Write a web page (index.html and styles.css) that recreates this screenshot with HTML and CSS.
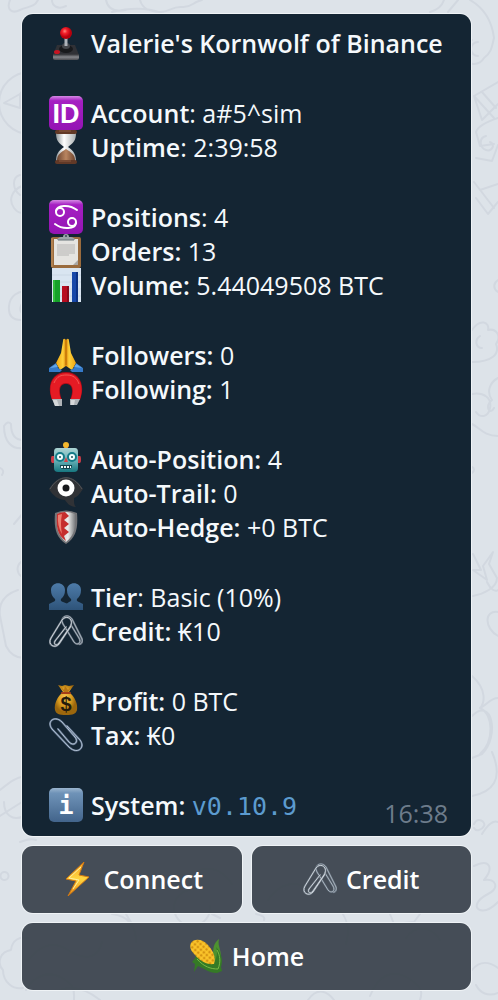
FILE: index.html
```html
<!DOCTYPE html>
<html lang="en">
<head>
  <meta charset="UTF-8" />
  <meta name="viewport" content="width=device-width, initial-scale=1" />
  <title>Valerie's Kornwolf of Binance</title>
  <link rel="stylesheet" href="styles.css">
</head>
<body>
  <!-- Chat wallpaper -->
  <svg class="wallpaper" viewBox="0 0 498 1000" preserveAspectRatio="xMidYMid slice" aria-hidden="true">
    <path d="M10 0c-4 10 2 14 10 10s14-2 18-10M52 0c0 6 6 10 14 6M106 0c2 10 10 12 20 10M140 0c2 8 10 12 20 12s12-6 22-5 10-5 20-7M112 12c16-4 34-6 52 2"/>
    <path d="M30 72a31 31 0 1 0 0 62M4 103l16-9v14zM20 94c4-4 4-8 8-10M20 175c-8 2-8 14 0 20M22 186c-10 4-14 14-8 22s10 4 14 2"/>
    <path d="M28 292c-10-2-18 4-19 14s4 14 12 14M26 302c-6 0-8 10-2 12M4 426c0 16 8 24 20 22M11 424c0 10 4 16 12 16M4 426q4-6 7-2M0 468q5 2 2 7M14 524l10-12M24 560c-8 4-8 12-3 16"/>
    <path d="M18 590c-12 4-20 12-18 26l6 30c4 8 10 12 18 12M0 790c10-8 18-14 24-13M4 802c0 12 8 20 20 14M0 816l22-14M4 872a4 4 0 1 0 1 8 4 4 0 0 0-1-8M28 938c-8-2-16 2-17 12-12 2-14 14-8 20 0 12 10 20 20 18M60 990c16-6 30 2 40 10"/>
    <path d="M430 12c8-2 12-6 14-12M470 0c14 8 22 22 24 38M494 38c-2 8-2 14-10 20a12 12 0 1 1-12-18M478 42a7 7 0 1 0 0 14M448 12l10-12M498 82l-24 14 8 24 16-16M474 96l20 22M482 92l14 16"/>
    <path d="M498 118c-12 4-20 8-22 14l4 14 14-2M486 136c-8 2-6 12 0 14s10-6 4-8M476 158l16 3 6-16M474 182l20 26M480 190l18-6M476 198l12 16 10-12M498 280c-5 3-5 9 0 12"/>
    <path d="M472 330c8-12 18-8 16 0 8-2 14 6 8 14 4 10-4 18-24 18M480 336c-6 4-4 12 2 12M498 378c-8 4-12 14-6 22-8 6-2 16 2 8M472 394c12-2 20 4 18 14s-10 10-14 4M472 424c8 4 12 12 26 12M472 467q4 2 0 6"/>
    <path d="M473 554l8 16h-8l14 10-4-14 10-14-4 12 8 14c0 10-14 16-24 18M487 582c4 8 8 10 11 8M498 612c-14-2-14 16 0 24M472 676c16 14 12 28 8 32M498 698c-8 0-12 8-18 10M472 716c20-20 28 20 10 38l-10 4M480 708c14 6 14 34 0 46M492 752c12 28 0 40-20 44M474 824c4-8 12-2 10 2s-8 6-10 2M482 834c6-10 12-14 16-12"/>
    <path d="M474 866c16-8 20 2 10 14 12-2 16 8 4 14s-14 14-8 16 12-2 18-8M472 970c8-10 18-8 26-2M476 985c4 8 12 12 22 8M20 842c6-2 10-4 16-2M200 870c14-4 24 2 32 14M112 914c16 2 24 12 24 28M126 914l6 10M212 914l8 4M256 914q10 2 8 6M390 914l4 10 20-2 6-8M340 910c8 10 10 20 6 34M308 1000c10-14 20-8 26 0M370 996c8-20 22-28 38-18s14 16 12 22"/>
    <path d="M26 990c8-14 22-20 36-12s12 14 12 22M28 960c12-14 24-20 40-10s30 10 34-8M190 890a18 18 0 1 0 20 16M268 900c12-18 28-20 44-10M440 940c-10-16-26-14-34-2"/>
  </svg>

  <!-- Shared icon -->
  <svg class="symbols" aria-hidden="true">
    <symbol id="clips" viewBox="0 0 34 34">
      <g fill="none" stroke-linecap="round">
        <path d="M22 11l8 13c3 5-2 8-5 4L14 10c-4-7 5-11 9-5l10 20c1 3-1 6-3 5" stroke="#5f6b78" stroke-width="2"/>
        <path d="M22 11l8 13c3 5-2 8-5 4L14 10c-4-7 5-11 9-5l10 20c1 3-1 6-3 5" stroke="#a9b3bd" stroke-width="1"/>
        <path d="M17 13L6 27c-2 4 2 5 4 2l11-16c5-8-4-13-8-7L2 24c-4 7 4 11 8 6L22 12" stroke="#66717c" stroke-width="2"/>
        <path d="M17 13L6 27c-2 4 2 5 4 2l11-16c5-8-4-13-8-7L2 24c-4 7 4 11 8 6L22 12" stroke="#ccd3da" stroke-width="1"/>
      </g>
    </symbol>
  </svg>

  <main class="chat">
    <article class="message">
      <section class="group">
        <h1 class="row">
          <svg class="icon" viewBox="0 0 34 34" aria-hidden="true">
            <defs>
              <radialGradient id="ball" cx=".4" cy=".35"><stop offset="0" stop-color="#ff8a7c"/><stop offset=".4" stop-color="#f5202c"/><stop offset="1" stop-color="#b8000c"/></radialGradient>
              <linearGradient id="base" x2="0" y2="1"><stop offset="0" stop-color="#2c2d31"/><stop offset=".5" stop-color="#85868b"/><stop offset="1" stop-color="#4c4d52"/></linearGradient>
            </defs>
            <path d="M8 19h18l4 10H4z" fill="#303136"/>
            <path d="M4 28h26v4q0 2-2 2H6q-2 0-2-2z" fill="url(#base)"/>
            <ellipse cx="17" cy="23" rx="7" ry="4" fill="#191a1d"/>
            <ellipse cx="17" cy="20" rx="4" ry="3" fill="#45474c"/>
            <path d="M17 11v9" stroke="#aeb3ba" stroke-width="3"/>
            <ellipse cx="8" cy="26" rx="3" ry="2" fill="#c51422"/>
            <circle cx="17" cy="7" r="6" fill="url(#ball)"/>
          </svg>
          <b>Valerie's Kornwolf of Binance</b>
        </h1>
      </section>

      <section class="group">
        <p class="row">
          <svg class="icon" viewBox="0 0 34 34" aria-hidden="true">
            <defs><linearGradient id="purple" x2="0" y2="1"><stop offset="0" stop-color="#d58ae4"/><stop offset=".14" stop-color="#a51fc2"/><stop offset="1" stop-color="#9414b4"/></linearGradient></defs>
            <rect width="34" height="34" rx="5" fill="url(#purple)"/>
            <text x="17" y="27" text-anchor="middle" class="glyph-id">ID</text>
          </svg>
          <span><b>Account</b>: a#5^sim</span>
        </p>
        <p class="row">
          <svg class="icon" viewBox="0 0 34 34" aria-hidden="true">
            <defs>
              <linearGradient id="glass"><stop offset="0" stop-color="#8f9699"/><stop offset=".4" stop-color="#fff"/><stop offset="1" stop-color="#a9aeb0"/></linearGradient>
              <linearGradient id="sand"><stop offset="0" stop-color="#6e4631"/><stop offset=".5" stop-color="#b98560"/><stop offset="1" stop-color="#704630"/></linearGradient>
            </defs>
            <path d="M7 3h20c0 8-3 10-8 14 6 4 8 8 8 14H7c0-6 2-10 8-14C10 13 7 11 7 3z" fill="url(#glass)"/>
            <path d="M8 30c0-5 4-8 9-11 5 3 9 6 9 11z" fill="url(#sand)"/>
            <rect x="6" width="22" height="4" rx="2" fill="#623927"/>
            <rect x="6" y="30" width="22" height="4" rx="2" fill="#623927"/>
            <path d="M10 1h12M10 31h12" stroke="#8a5a40" stroke-width="1"/>
          </svg>
          <span><b>Uptime</b>: 2:39:58</span>
        </p>
      </section>

      <section class="group">
        <p class="row">
          <svg class="icon" viewBox="0 0 34 34" aria-hidden="true">
            <rect width="34" height="34" rx="5" fill="url(#purple)"/>
            <g fill="none" stroke="#fff" stroke-width="2" stroke-linecap="round">
              <circle cx="11" cy="12" r="4"/>
              <circle cx="23" cy="22" r="4"/>
              <path d="M7 11c1-6 13-7 21-1M27 23c-1 6-13 7-21 1"/>
            </g>
          </svg>
          <span><b>Positions</b>: 4</span>
        </p>
        <p class="row">
          <svg class="icon" viewBox="0 0 34 34" aria-hidden="true">
            <rect x="2" y="3" width="30" height="31" rx="2" fill="#9a6b3d"/>
            <path d="M3 4v29" stroke="#c79662" stroke-width="1"/>
            <path d="M5 5h24v26H5z" fill="#e5e4e1"/>
            <path d="M24 31l5-5v5z" fill="#aaa8a5"/>
            <path d="M8 11h18M8 13h18M8 15h18M8 17h18M8 19h18M8 21h12" stroke="#b6b5b4" stroke-width="1"/>
            <path d="M8 6q0-2 4-3h2q0-3 3-3t3 3h2q4 1 4 3z" fill="#9ba5aa"/>
            <circle cx="17" cy="2" r="1" fill="#354752"/>
            <path d="M9 6h16" stroke="#68747b"/>
          </svg>
          <span><b>Orders:</b> 13</span>
        </p>
        <p class="row">
          <svg class="icon" viewBox="0 0 34 34" aria-hidden="true">
            <path d="M3 0h29v34H3z" fill="#d9e5f1"/>
            <path d="M3 7h29M3 14h29M3 21h29M3 28h29" stroke="#cbd8e5" stroke-width="1"/>
            <path d="M4 12h7v22H4z" fill="#16a129"/><path d="M4 12h2v22H4z" fill="#31bd3c"/>
            <path d="M13 18h7v16h-7z" fill="#b70c20"/><path d="M18 18h2v16h-2z" fill="#8b071a"/>
            <path d="M23 4h6v30h-6z" fill="#1748a9"/><path d="M27 4h2v30h-2z" fill="#0c3284"/>
          </svg>
          <span><b>Volume:</b> 5.44049508 BTC</span>
        </p>
      </section>

      <section class="group">
        <p class="row">
          <svg class="icon" viewBox="0 0 34 34" aria-hidden="true">
            <defs><linearGradient id="hands"><stop offset="0" stop-color="#f0a510"/><stop offset=".35" stop-color="#ffd13b"/><stop offset=".5" stop-color="#dc8607"/><stop offset=".65" stop-color="#ffd13b"/><stop offset="1" stop-color="#f0a510"/></linearGradient></defs>
            <path d="M16 1q-2-1-2 2l-2 12-5 10 4 7 6-4 6 4 4-7-5-10-2-12q0-3-2-2l-1 1z" fill="url(#hands)"/>
            <path d="M17 2v25" stroke="#b86a06" stroke-width="1"/>
            <path d="M0 30l7-5q1 6 6 7l-2 2H0zM34 30l-7-5q-1 6-6 7l2 2h11z" fill="#357ac9"/>
            <path d="M1 30l6-4 2 3zM33 30l-6-4-2 3z" fill="#62a6e9"/>
          </svg>
          <span><b>Followers:</b> 0</span>
        </p>
        <p class="row">
          <svg class="icon" viewBox="0 0 34 34" aria-hidden="true">
            <path d="M3 28C-3 12 4 0 17 0s20 12 14 28H21c4-10 2-16-4-16s-8 6-4 16z" fill="#a90b18"/>
            <path d="M3 27C-2 12 5 1 17 1s19 11 14 26h-9c4-10 1-16-5-16s-9 6-5 16z" fill="#e51b24"/>
            <path d="M5 11C8 4 12 3 18 3s10 3 12 9" fill="none" stroke="#f45650" stroke-width="1"/>
            <path d="M3 27h10v7H6zM21 27h10l-3 6h-7z" fill="#aeb3b7"/>
            <path d="M4 28h4l2 6H6zM22 28h4l-1 5h-3z" fill="#d5d8da"/>
          </svg>
          <span><b>Following:</b> 1</span>
        </p>
      </section>

      <section class="group">
        <p class="row">
          <svg class="icon" viewBox="0 0 34 34" aria-hidden="true">
            <defs><linearGradient id="robot" x2="0" y2="1"><stop offset="0" stop-color="#acd4d4"/><stop offset=".55" stop-color="#62aeb4"/><stop offset="1" stop-color="#16767f"/></linearGradient></defs>
            <path d="M15 4h4v4h-4z" fill="#c64e36"/><ellipse cx="17" cy="3" rx="3" ry="3" fill="#f3b82d"/>
            <path d="M3 14h3v7H3q-1 0-1-3 0-4 1-4zM28 14h3q1 0 1 4 0 3-1 3h-3z" fill="#cc3c48"/>
            <path d="M8 6h18q3 0 3 4v16q0 4-4 4H9q-4 0-4-4V10q0-4 3-4z" fill="url(#robot)"/>
            <g fill="#f4ffff" stroke="#147b88" stroke-width="2"><circle cx="11" cy="15" r="4"/><circle cx="23" cy="15" r="4"/></g>
            <circle cx="11" cy="15" r="1" fill="#23535b"/><circle cx="23" cy="15" r="1" fill="#23535b"/>
            <path d="M17 15l2 5h-4z" fill="#d34345"/>
            <path d="M11 23h12q0 4-3 4h-6q-3 0-3-4z" fill="#13444c"/>
            <path d="M12 25h10" stroke="#eef9f8" stroke-width="2" stroke-dasharray="2 1"/>
          </svg>
          <span><b>Auto-Position:</b> 4</span>
        </p>
        <p class="row">
          <svg class="icon" viewBox="0 0 34 34" aria-hidden="true">
            <path d="M0 13C10-3 24-3 34 13c-4 6-6 8-9 9 0 5 0 7 2 9-6 0-9-4-11-7C10 24 4 20 0 13z" fill="#303236"/>
            <path d="M1 13C10-2 24-2 33 13" fill="none" stroke="#53565b" stroke-width="1"/>
            <circle cx="17" cy="12" r="6" fill="#17191c" stroke="#fff" stroke-width="5"/>
          </svg>
          <span><b>Auto-Trail:</b> 0</span>
        </p>
        <p class="row">
          <svg class="icon" viewBox="0 0 34 34" aria-hidden="true">
            <defs><linearGradient id="steel"><stop offset="0" stop-color="#b7babd"/><stop offset=".6" stop-color="#ededeb"/><stop offset="1" stop-color="#77797c"/></linearGradient></defs>
            <path d="M6 3q11-5 22 0c1 13 0 24-11 31C6 27 5 16 6 3z" fill="#747477"/>
            <path d="M8 4q9-4 18 0c1 12 0 21-9 28C8 25 7 16 8 4z" fill="url(#steel)"/>
            <path d="M8 4q4-2 8-2l4 4-5 4 5 4-5 4 5 4-5 4 2 5C8 25 7 16 8 4z" fill="#c52e2d"/>
            <path d="M9 5l4-1q-2 10 0 20-5-8-4-19z" fill="#ee7f71"/>
          </svg>
          <span><b>Auto-Hedge:</b> +0 BTC</span>
        </p>
      </section>

      <section class="group">
        <p class="row">
          <svg class="icon" viewBox="0 0 34 34" aria-hidden="true">
            <defs><linearGradient id="people" x2="0" y2="1"><stop offset="0" stop-color="#4d7ba9"/><stop offset="1" stop-color="#2e5379"/></linearGradient></defs>
            <path d="M16 30V25l4-3q3-1 2-3-4-3-4-9c0-9 14-9 14 0q0 6-4 9-1 2 2 3l4 2v6z" fill="url(#people)"/>
            <path d="M0 30v-6l4-2q3-1 2-3-4-3-4-9c0-9 14-9 14 0q0 6-4 9-1 2 2 3l5 2v6z" fill="url(#people)"/>
          </svg>
          <span><b>Tier</b>: Basic (10%)</span>
        </p>
        <p class="row">
          <svg class="icon" aria-hidden="true"><use href="#clips"/></svg>
          <span><b>Credit:</b> ₭10</span>
        </p>
      </section>

      <section class="group">
        <p class="row">
          <svg class="icon" viewBox="0 0 34 34" aria-hidden="true">
            <defs><radialGradient id="bag" cx=".45" cy=".4"><stop offset="0" stop-color="#f7c24d"/><stop offset=".6" stop-color="#d99c20"/><stop offset="1" stop-color="#9c670d"/></radialGradient></defs>
            <path d="M9 1l4 1 3-1 4 1 5-1-5 7c6 5 9 12 8 18-1 4-4 5-11 5S7 30 6 26C5 20 8 13 14 8z" fill="url(#bag)"/>
            <path d="M11 2l4 4 1-4 3 4 4-4-4 6h-4z" fill="#b77516"/>
            <path d="M13 9h8" stroke="#a53e18" stroke-width="2" stroke-linecap="round"/>
            <text x="17" y="27" text-anchor="middle" class="glyph-dollar">$</text>
          </svg>
          <span><b>Profit:</b> 0 BTC</span>
        </p>
        <p class="row">
          <svg class="icon" viewBox="0 0 34 34" aria-hidden="true">
            <g fill="none" stroke-linecap="round">
              <path d="M9 11l11 13c5 5 10 0 6-5L13 4C6-3-3 3 3 11l17 18c8 8 17 1 11-7L18 8" stroke="#5c6f87" stroke-width="2"/>
              <path d="M9 11l11 13c5 5 10 0 6-5L13 4C6-3-3 3 3 11l17 18c8 8 17 1 11-7L18 8" stroke="#b3c2d4" stroke-width="1"/>
            </g>
          </svg>
          <span><b>Tax:</b> ₭0</span>
        </p>
      </section>

      <footer class="group last">
        <p class="row">
          <svg class="icon" viewBox="0 0 34 34" aria-hidden="true">
            <defs><linearGradient id="info" x2="0" y2="1"><stop offset="0" stop-color="#9bb5cf"/><stop offset=".15" stop-color="#6f93b8"/><stop offset="1" stop-color="#42648b"/></linearGradient></defs>
            <rect width="34" height="34" rx="5" fill="url(#info)"/>
            <text x="17" y="26" text-anchor="middle" class="glyph-info">i</text>
          </svg>
          <span><b>System:</b> <code>v0.10.9</code></span>
        </p>
        <time>16:38</time>
      </footer>
    </article>

    <div class="keyboard">
      <button type="button">
        <svg class="icon" viewBox="0 0 34 34" aria-hidden="true">
          <defs><linearGradient id="bolt" x2="0" y2="1"><stop offset="0" stop-color="#f9a526"/><stop offset=".5" stop-color="#ffd640"/><stop offset="1" stop-color="#e98a14"/></linearGradient></defs>
          <path d="M24 0L6 17l10 2-8 15 21-19-10-2z" fill="url(#bolt)" stroke="#d27913" stroke-width="1"/>
          <path d="M21 5L9 16l10 2-6 9" fill="none" stroke="#fff0a1" stroke-width="1"/>
        </svg>
        Connect
      </button>
      <button type="button">
        <svg class="icon" aria-hidden="true"><use href="#clips"/></svg>
        Credit
      </button>
      <button type="button" class="wide">
        <svg class="icon" viewBox="0 0 34 34" aria-hidden="true">
          <defs><pattern id="kernels" width="4" height="4" patternUnits="userSpaceOnUse" patternTransform="rotate(42)"><rect width="4" height="4" fill="#c27c06"/><circle cx="2" cy="2" r="2" fill="#fbc42a"/></pattern></defs>
          <path d="M20 24C28 16 20 8 30 0c-2 8 4 12 1 22z" fill="#4d922f"/>
          <path d="M3 23c4-4 4-6 4-9 4 5 10 10 18 10 3-6 4-11 2-16 6 6 7 14 5 20l1 4-5 2c-9 0-13-5-19-7l-4 6 1-8z" fill="#357a26"/>
          <path d="M2 4C5-1 14 0 19 6c6 7 8 13 6 19-7 1-14-3-19-9C2 12 0 8 2 4z" fill="url(#kernels)"/>
          <path d="M8 20c7 8 14 10 21 10 3-7 2-14-1-19" fill="none" stroke="#78b845" stroke-width="1"/>
        </svg>
        Home
      </button>
    </div>
  </main>
</body>
</html>
```
FILE: styles.css
```css
* {
  box-sizing: border-box;
}

body {
  margin: 0;
  min-height: 100vh;
  position: relative;
  background-color: #dde3e9;
  font-family: "Open Sans", "Noto Sans", sans-serif;
  font-size: 25px;
  color: #f5f9fc;
}

.wallpaper {
  position: absolute;
  inset: 0;
  width: 100%;
  height: 100%;
  fill: none;
  stroke: #d2d8e0;
  stroke-width: 2;
  stroke-linecap: round;
  stroke-linejoin: round;
}

.symbols {
  position: absolute;
  width: 0;
  height: 0;
}

.chat {
  position: relative;
  display: flex;
  flex-direction: column;
  gap: 10px;
  padding: 14px 27px 10px 22px;
}

.message {
  display: flex;
  flex-direction: column;
  gap: 36px;
  padding: 12px 23px 6px 27px;
  background-color: #142533;
  border-radius: 11px;
  box-shadow: 0 0 0 1px #eff3f6;
}

.row {
  display: flex;
  align-items: center;
  gap: 8px;
  margin: 0;
  font-size: 25px;
  font-weight: 400;
  line-height: 34px;
  white-space: nowrap;
}

b {
  font-weight: 600;
}

.icon {
  flex: none;
  display: block;
  width: 34px;
  height: 34px;
}

.glyph-id {
  fill: #fff;
  font: 700 27px "Liberation Sans", sans-serif;
}

.glyph-dollar {
  fill: #241b0c;
  font: 700 20px "Liberation Sans", sans-serif;
}

.glyph-info {
  fill: #fff;
  font: 700 25px "DejaVu Sans Mono", monospace;
}

code {
  font-family: "DejaVu Sans Mono", monospace;
  font-size: 25px;
  line-height: 1;
  color: #5c9bcf;
}

.last {
  display: flex;
  justify-content: space-between;
  align-items: flex-start;
}

time {
  margin-top: 8px;
  font-size: 25px;
  line-height: 34px;
  color: #6d7c8b;
}

.keyboard {
  display: grid;
  grid-template-columns: 1fr 1fr;
  gap: 10px;
}

button {
  display: flex;
  justify-content: center;
  align-items: center;
  gap: 9px;
  height: 67px;
  padding: 0 0 2px;
  border: none;
  border-radius: 11px;
  background-color: rgba(57, 66, 75, 0.93);
  box-shadow: 0 0 0 1px #eff3f6;
  font-family: inherit;
  font-size: 25px;
  font-weight: 600;
  color: #fff;
  cursor: pointer;
}

button:hover {
  background-color: rgba(44, 52, 61, 0.93);
}

.wide {
  grid-column: 1 / -1;
}
```
